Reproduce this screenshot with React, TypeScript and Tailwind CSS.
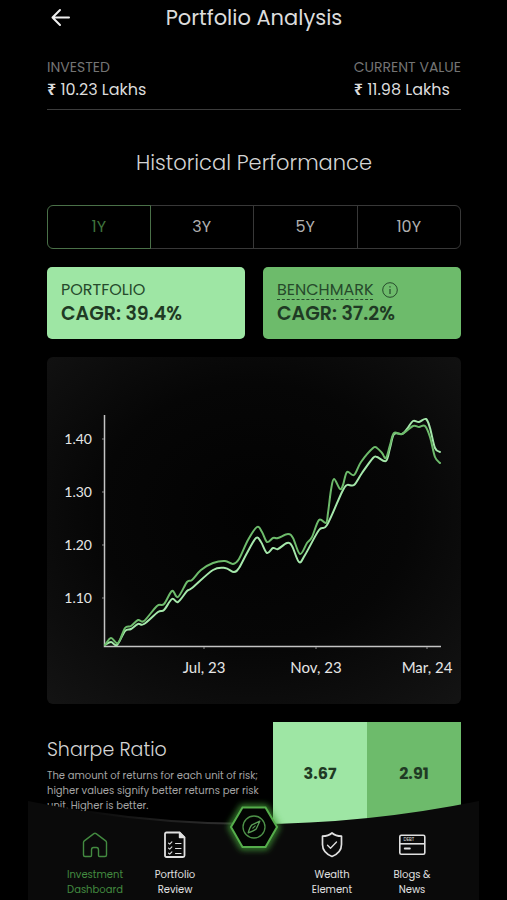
import React, { useState } from "react";

type Point = [number, number];

const portfolioPoints: Point[] = [
  [105, 645], [111, 642], [117, 645], [125, 631], [131, 629], [138, 624],
  [144, 624], [158, 612], [164, 610], [172, 599], [178, 602], [187, 591],
  [192, 588], [213, 570], [225, 568], [234, 572], [239, 568],
  [247, 553], [256, 538], [261, 542], [267, 553], [273, 548], [278, 549],
  [287, 543], [292, 546], [299, 562], [305, 555], [319, 530], [327, 525],
  [342, 492], [347, 485], [354, 485], [362, 473], [373, 458], [377, 457],
  [386, 461], [390, 448], [394, 434], [402, 434], [407, 429], [413, 421],
  [419, 422], [426, 419], [430, 428], [435, 448], [440, 452],
];

const benchmarkPoints: Point[] = [
  [105, 645], [111, 638], [118, 643], [125, 628], [131, 626], [138, 620],
  [144, 621], [157, 606], [164, 604], [172, 591], [178, 597], [187, 582],
  [192, 580], [201, 570], [213, 563], [225, 561], [233, 564], [239, 559],
  [248, 540], [257, 527], [262, 532], [267, 542], [273, 538], [278, 538],
  [288, 534], [293, 538], [300, 554], [307, 543], [312, 537], [319, 520],
  [326, 523], [328, 513], [331, 490], [334, 479], [340, 489], [343, 485],
  [347, 472], [354, 475], [361, 462], [373, 448], [377, 448], [382, 453],
  [386, 458], [390, 445], [394, 433], [402, 434], [413, 426], [419, 427],
  [425, 426], [430, 437], [435, 457], [440, 463],
];

// smooth curve through all points
const toPath = (pts: Point[]) => {
  let d = `M${pts[0][0]} ${pts[0][1]}`;
  for (let i = 0; i < pts.length - 1; i++) {
    const a = pts[i - 1] || pts[i];
    const b = pts[i];
    const c = pts[i + 1];
    const e = pts[i + 2] || c;
    d += ` C${b[0] + (c[0] - a[0]) / 6} ${b[1] + (c[1] - a[1]) / 6} ${
      c[0] - (e[0] - b[0]) / 6
    } ${c[1] - (e[1] - b[1]) / 6} ${c[0]} ${c[1]}`;
  }
  return d;
};

const yTicks = [
  { label: "1.40", y: 439 },
  { label: "1.30", y: 492 },
  { label: "1.20", y: 545 },
  { label: "1.10", y: 598 },
];

const xTicks = [
  { label: "Jul, 23", x: 204 },
  { label: "Nov, 23", x: 316 },
  { label: "Mar, 24", x: 427 },
];

const Chart = () => (
  <svg
    viewBox="47 357 414 347"
    className="block w-full rounded-md"
    role="img"
    aria-label="Portfolio against benchmark"
  >
    <defs>
      <radialGradient id="chartBg" cx="0.5" cy="0.45" r="0.75">
        <stop offset="0" stopColor="#020202" />
        <stop offset="0.5" stopColor="#060606" />
        <stop offset="1" stopColor="#141414" />
      </radialGradient>
    </defs>
    <rect x="47" y="357" width="414" height="347" fill="url(#chartBg)" />
    <path d="M104.5 415V646.5H441" fill="none" stroke="#c4c4c4" strokeWidth="1.5" />
    {yTicks.map((t) => (
      <g key={t.label}>
        <path d={`M102 ${t.y}h2`} stroke="#8a8a8a" />
        <text x="92" y={t.y + 5} textAnchor="end" fill="#e6e6e6" className="text-[14px]">
          {t.label}
        </text>
      </g>
    ))}
    {xTicks.map((t) => (
      <g key={t.label}>
        <path d={`M${t.x} 647v2`} stroke="#8a8a8a" />
        <text x={t.x} y="673" textAnchor="middle" fill="#e6e6e6" className="text-[15px]">
          {t.label}
        </text>
      </g>
    ))}
    <path d={toPath(portfolioPoints)} fill="none" stroke="#a5e8ab" strokeWidth="2" strokeLinecap="round" />
    <path d={toPath(benchmarkPoints)} fill="none" stroke="#6dbb6b" strokeWidth="2" strokeLinecap="round" />
  </svg>
);

const HomeIcon = () => (
  <svg viewBox="0 0 28 28" className="size-7" fill="none" stroke="currentColor" strokeWidth="1.4" strokeLinejoin="round">
    <path d="M2.5 11.5Q2.5 10.5 3.3 9.9L12.9 2.6Q14 1.8 15.1 2.6L24.7 9.9Q25.5 10.5 25.5 11.5V24Q25.5 25.5 24 25.5H18.5Q17.5 25.5 17.5 24.5V19Q17.5 16.5 15.5 16.5H12.5Q10.5 16.5 10.5 19V24.5Q10.5 25.5 9.5 25.5H4Q2.5 25.5 2.5 24Z" />
  </svg>
);

const ReviewIcon = () => (
  <svg viewBox="0 0 28 28" className="size-7" fill="none" stroke="currentColor" strokeWidth="1.4" strokeLinejoin="round" strokeLinecap="round">
    <path strokeWidth="1.8" d="M5.5 1.5H18.5L23.5 6.5V24.5Q23.5 26 22 26H5.5Q4 26 4 24.5V3Q4 1.5 5.5 1.5Z" />
    <path fill="currentColor" d="M18.5 1.5V6.5H23.5Z" />
    <path strokeWidth="1.1" d="M7.5 12.2l1.2 1 2.2-2.4M7.5 17.2l1.2 1 2.2-2.4M7.5 22.2l1.2 1 2.2-2.4M14.5 12.5h5.5M14.5 17.5h5.5M14.5 22.5h5.5" />
  </svg>
);

const ShieldIcon = () => (
  <svg viewBox="0 0 28 28" className="size-7" fill="none" stroke="currentColor" strokeWidth="1.7" strokeLinejoin="round" strokeLinecap="round">
    <path d="M14 2C16.5 4.2 19.5 5.2 23.5 5.2V13.5C23.5 19 20 23 14 25.5C8 23 4.5 19 4.5 13.5V5.2C8.5 5.2 11.5 4.2 14 2Z" />
    <path strokeWidth="1.3" d="M9.5 14.3l3 2.9 6-6.2" />
  </svg>
);

const CardIcon = () => (
  <svg viewBox="0 0 28 28" className="size-7" fill="none" stroke="currentColor" strokeWidth="1.6">
    <rect x="1.8" y="4.2" width="25" height="19" rx="1.5" />
    <path d="M1.8 12.8H26.8" />
    <path strokeWidth="2" strokeLinecap="round" d="M6.8 17.5h5" />
    <text x="5.5" y="10.2" fontSize="4.5" fill="currentColor" stroke="none">DEBT</text>
  </svg>
);

const CompassButton = () => (
  <button
    aria-label="Explore"
    className="absolute bottom-[33px] left-1/2 h-20 w-[84px] -translate-x-1/2 cursor-pointer"
  >
    <svg viewBox="0 0 84 80" className="size-full" fill="none">
      <defs>
        <filter id="glow" x="-30%" y="-30%" width="160%" height="160%">
          <feGaussianBlur stdDeviation="3" />
        </filter>
      </defs>
      <path d="M30.5 20.5H53.5L65 40L53.5 60H30.5L19 40Z" stroke="#439f38" strokeWidth="5" filter="url(#glow)" />
      <path d="M30.5 20.5H53.5L65 40L53.5 60H30.5L19 40Z" fill="#020402" stroke="#55ad4b" strokeWidth="2" />
      <circle cx="42" cy="40" r="11" stroke="#4d9148" strokeWidth="1.3" />
      <path d="M47.8 34.2L40 37.8Q38 39.8 36.2 45.8Q42 44 44.2 42Z" stroke="#5a9c55" strokeWidth="1.3" strokeLinejoin="round" />
      <path d="M40.8 41.2L43.2 38.8" stroke="#5a9c55" strokeWidth="1.1" strokeLinecap="round" />
    </svg>
  </button>
);

const NavItem = ({
  icon,
  lines,
  active,
}: {
  icon: React.ReactNode;
  lines: string[];
  active?: boolean;
}) => (
  <a
    href="#"
    className={`flex w-20 flex-col items-center text-[10px] leading-[15px] ${
      active ? "text-[#438a40]" : "text-[#e0e0e0]"
    }`}
  >
    {icon}
    <span className="mt-2">{lines[0]}</span>
    <span>{lines[1]}</span>
  </a>
);

const BottomNav = () => (
  <nav className="fixed inset-x-7 bottom-0">
    <svg viewBox="0 0 451 24" preserveAspectRatio="none" className="block h-6 w-full" fill="none">
      <defs>
        <linearGradient id="edge" x1="0" x2="1">
          <stop offset="0" stopColor="#0a0a0a" />
          <stop offset="1" stopColor="#363636" />
        </linearGradient>
      </defs>
      <path d="M0 0Q113 23 225 23Q338 23 451 0V24H0Z" fill="#0a0a0a" />
      <path d="M58 10.5Q142 23 225 23" stroke="url(#edge)" strokeWidth="2" />
    </svg>
    <div className="flex justify-between bg-[#0a0a0a] px-[27px] pt-1.5 pb-[3px]">
      <div className="flex">
        <NavItem icon={<HomeIcon />} lines={["Investment", "Dashboard"]} active />
        <NavItem icon={<ReviewIcon />} lines={["Portfolio", "Review"]} />
      </div>
      <div className="flex">
        <NavItem icon={<ShieldIcon />} lines={["Wealth", "Element"]} />
        <NavItem icon={<CardIcon />} lines={["Blogs &", "News"]} />
      </div>
    </div>
    <CompassButton />
  </nav>
);

const Amount = ({ label, value }: { label: string; value: string }) => (
  <div>
    <div className="text-sm leading-[22px] text-[#747474]">{label}</div>
    <div className="text-base leading-[22px]">
      <span className="font-['Noto_Sans'] font-bold">₹</span> {value}
    </div>
  </div>
);

const App = () => {
  const [period, setPeriod] = useState("1Y");

  return (
    <div className="min-h-screen bg-black pr-[46px] pb-20 pl-[47px] font-['Poppins','Inter',sans-serif] text-[#dcdcdc]">
      <header className="grid grid-cols-[28px_1fr_28px] items-center pt-1">
        <button aria-label="Back" className="cursor-pointer pl-1 text-[#efefef]">
          <svg viewBox="0 0 20 20" className="size-5" fill="none" stroke="currentColor" strokeWidth="2" strokeLinecap="round" strokeLinejoin="round">
            <path d="M18 9.5H1.5M9 2L1.5 9.5L9 17" />
          </svg>
        </button>
        <h1 className="text-center text-[21px] leading-7">Portfolio Analysis</h1>
      </header>

      <section className="mt-6 flex justify-between border-b border-[#3c3c3c] pb-2">
        <Amount label="INVESTED" value="10.23 Lakhs" />
        <Amount label="CURRENT VALUE" value="11.98 Lakhs" />
      </section>

      <h2 className="mt-[39px] text-center text-[21px] leading-7 font-light text-[#d4d4d4]">
        Historical Performance
      </h2>

      <div className="mt-7 grid h-11 grid-cols-4">
        {["1Y", "3Y", "5Y", "10Y"].map((p) => (
          <button
            key={p}
            onClick={() => setPeriod(p)}
            className={`cursor-pointer border text-base first:rounded-l-md last:rounded-r-md not-first:-ml-px ${
              p === period
                ? "relative border-[#4a7048] text-[#3f733c]"
                : "border-[#383838] text-[#b0b0b0]"
            }`}
          >
            {p}
          </button>
        ))}
      </div>

      <div className="mt-[18px] grid grid-cols-2 gap-[18px] text-[#264a2c]">
        <div className="h-[72px] rounded-[5px] bg-[#9ee6a4] px-3.5 pt-3">
          <div className="text-base leading-[22px]">PORTFOLIO</div>
          <div className="text-[19px] leading-[26px] font-semibold text-[#1f3a24]">CAGR: 39.4%</div>
        </div>
        <div className="h-[72px] rounded-[5px] bg-[#6dbb6b] px-3.5 pt-3">
          <div className="flex items-center gap-2 text-base leading-[22px]">
            <span className="underline decoration-dashed decoration-1 underline-offset-4">BENCHMARK</span>
            <svg viewBox="0 0 16 16" className="size-4" fill="none" stroke="currentColor">
              <circle cx="8" cy="8" r="7.3" />
              <path d="M8 7v5M8 4.2v1.2" strokeWidth="1.2" />
            </svg>
          </div>
          <div className="text-[19px] leading-[26px] font-semibold text-[#1f3a24]">CAGR: 37.2%</div>
        </div>
      </div>

      <div className="mt-[18px] font-['Gill_Sans','Lato',sans-serif]">
        <Chart />
      </div>

      <section className="mt-[18px] flex">
        <div className="flex-1 pt-3.5">
          <h3 className="text-[19px] leading-7 font-light text-[#d4d4d4]">Sharpe Ratio</h3>
          <p className="mt-1 text-[10px] leading-[15px] text-[#a4a4a4]">
            The amount of returns for each unit of risk;
            <br />
            higher values signify better returns per risk
            <br />
            unit. Higher is better.
          </p>
        </div>
        <div className="grid h-[104px] w-[188px] shrink-0 grid-cols-2 text-center text-base leading-[104px] font-bold text-[#1f3a24]">
          <div className="bg-[#9ee6a4]">3.67</div>
          <div className="bg-[#6dbb6b]">2.91</div>
        </div>
      </section>

      <BottomNav />
    </div>
  );
};

export default App;
